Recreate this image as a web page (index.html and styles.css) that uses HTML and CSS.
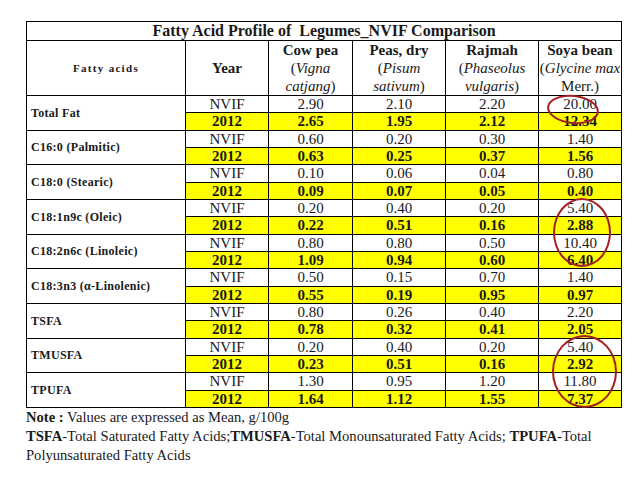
FILE: index.html
```html
<!DOCTYPE html>
<html>
<head>
<meta charset="utf-8">
<link rel="stylesheet" href="styles.css">
</head>
<body>
<div class="page">
  <div class="table-wrap">
    <table class="fa">
      <colgroup>
        <col class="c-acid"><col class="c-year"><col class="c-cow"><col class="c-pea"><col class="c-raj"><col class="c-soy">
      </colgroup>
      <tr class="r-title"><th colspan="6" class="title">Fatty Acid Profile of&nbsp; Legumes_NVIF Comparison</th></tr>
      <tr class="r-head">
        <th class="h-acid">Fatty acids</th>
        <th class="h-year">Year</th>
        <th class="h-crop">Cow pea<br><span class="sci">(<i>Vigna</i><br><i>catjang</i>)</span></th>
        <th class="h-crop">Peas, dry<br><span class="sci">(<i>Pisum</i><br><i>sativum</i>)</span></th>
        <th class="h-crop">Rajmah<br><span class="sci">(<i>Phaseolus</i><br><i>vulgaris</i>)</span></th>
        <th class="h-crop">Soya bean<br><span class="sci">(<i>Glycine max</i><br>Merr.)</span></th>
      </tr>
      <tr class="r-n"><td rowspan="2" class="acid">Total Fat</td><td>NVIF</td><td>2.90</td><td>2.10</td><td>2.20</td><td>20.00</td></tr>
      <tr class="r-y"><td>2012</td><td>2.65</td><td>1.95</td><td>2.12</td><td>12.34</td></tr>
      <tr class="r-n"><td rowspan="2" class="acid">C16:0 (Palmitic)</td><td>NVIF</td><td>0.60</td><td>0.20</td><td>0.30</td><td>1.40</td></tr>
      <tr class="r-y"><td>2012</td><td>0.63</td><td>0.25</td><td>0.37</td><td>1.56</td></tr>
      <tr class="r-n"><td rowspan="2" class="acid">C18:0 (Stearic)</td><td>NVIF</td><td>0.10</td><td>0.06</td><td>0.04</td><td>0.80</td></tr>
      <tr class="r-y"><td>2012</td><td>0.09</td><td>0.07</td><td>0.05</td><td>0.40</td></tr>
      <tr class="r-n"><td rowspan="2" class="acid">C18:1n9c (Oleic)</td><td>NVIF</td><td>0.20</td><td>0.40</td><td>0.20</td><td>5.40</td></tr>
      <tr class="r-y"><td>2012</td><td>0.22</td><td>0.51</td><td>0.16</td><td>2.88</td></tr>
      <tr class="r-n"><td rowspan="2" class="acid">C18:2n6c (Linoleic)</td><td>NVIF</td><td>0.80</td><td>0.80</td><td>0.50</td><td>10.40</td></tr>
      <tr class="r-y"><td>2012</td><td>1.09</td><td>0.94</td><td>0.60</td><td>6.40</td></tr>
      <tr class="r-n"><td rowspan="2" class="acid">C18:3n3 (α-Linolenic)</td><td>NVIF</td><td>0.50</td><td>0.15</td><td>0.70</td><td>1.40</td></tr>
      <tr class="r-y"><td>2012</td><td>0.55</td><td>0.19</td><td>0.95</td><td>0.97</td></tr>
      <tr class="r-n"><td rowspan="2" class="acid">TSFA</td><td>NVIF</td><td>0.80</td><td>0.26</td><td>0.40</td><td>2.20</td></tr>
      <tr class="r-y"><td>2012</td><td>0.78</td><td>0.32</td><td>0.41</td><td>2.05</td></tr>
      <tr class="r-n"><td rowspan="2" class="acid">TMUSFA</td><td>NVIF</td><td>0.20</td><td>0.40</td><td>0.20</td><td>5.40</td></tr>
      <tr class="r-y"><td>2012</td><td>0.23</td><td>0.51</td><td>0.16</td><td>2.92</td></tr>
      <tr class="r-n"><td rowspan="2" class="acid">TPUFA</td><td>NVIF</td><td>1.30</td><td>0.95</td><td>1.20</td><td>11.80</td></tr>
      <tr class="r-y"><td>2012</td><td>1.64</td><td>1.12</td><td>1.55</td><td>7.37</td></tr>
    </table>
    <div class="ring ring-1"></div>
    <div class="ring ring-2"></div>
    <div class="ring ring-3"></div>
  </div>
  <div class="note">
    <p><b>Note :</b> Values are expressed as Mean, g/100g</p>
    <p><b>TSFA</b>-Total Saturated Fatty Acids;<b>TMUSFA</b>-Total Monounsaturated Fatty Acids; <b>TPUFA</b>-Total Polyunsaturated Fatty Acids</p>
  </div>
</div>
</body>
</html>
```

FILE: styles.css
```css
html, body {
  margin: 0;
  padding: 0;
  background: #fff;
}
body {
  font-family: "Liberation Serif", "DejaVu Serif", serif;
  color: #1a1a1a;
}
.page {
  padding: 21px 17px 0 26px;
}
.table-wrap {
  position: relative;
  width: 595px;
}
.fa {
  border-collapse: collapse;
  table-layout: fixed;
  width: 595px;
}
.c-acid { width: 159px; }
.c-year { width: 83px; }
.c-cow { width: 84px; }
.c-pea { width: 93px; }
.c-raj { width: 93px; }
.c-soy { width: 83px; }
.fa th, .fa td {
  border: 1px solid #000;
  padding: 0;
  text-align: center;
  vertical-align: middle;
}
.title {
  height: 18px;
  font-size: 16px;
  font-weight: bold;
  line-height: 18px;
}
.r-head th {
  height: 54px;
}
.h-acid {
  font-size: 11px;
  font-weight: bold;
  letter-spacing: 1.3px;
}
.h-year {
  font-size: 15px;
  font-weight: bold;
}
.h-crop {
  font-size: 15px;
  font-weight: bold;
  line-height: 18px;
}
.sci {
  font-weight: normal;
}
.fa td {
  height: 16.33px;
  font-size: 15px;
  line-height: 16px;
}
.fa td.acid {
  text-align: left;
  padding-left: 4px;
  font-size: 12px;
  font-weight: bold;
  letter-spacing: 0.3px;
  background: #fff;
}
.r-y td {
  background: #ffff00;
  font-weight: bold;
}
.ring {
  position: absolute;
  border: 2px solid #a31f24;
  border-radius: 50%;
  box-sizing: border-box;
}
.ring-1 {
  left: 521px;
  top: 74px;
  width: 52px;
  height: 29px;
  transform: rotate(6deg);
}
.ring-2 {
  left: 527px;
  top: 177px;
  width: 58px;
  height: 69px;
}
.ring-3 {
  left: 526px;
  top: 314px;
  width: 65px;
  height: 73px;
}
.note {
  width: 595px;
  font-size: 14.6px;
  line-height: 19px;
}
.note p {
  margin: 0;
}
```
